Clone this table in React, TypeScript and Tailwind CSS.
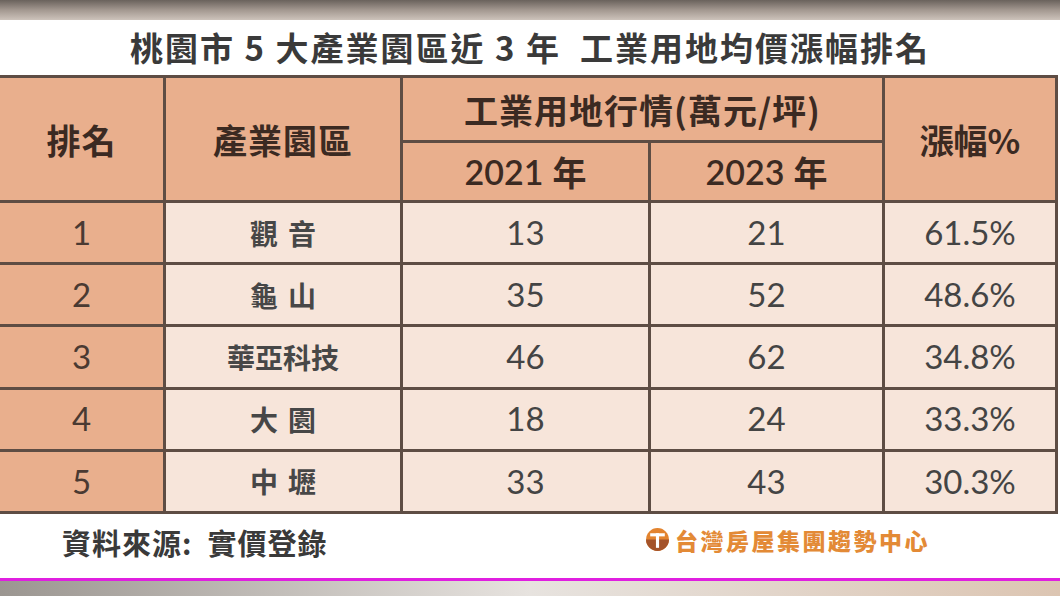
import React from "react";

const FONT = { fontFamily: "Lato, 'Noto Sans CJK TC', 'Noto Sans', sans-serif" };
const CJK = { fontFamily: "'Noto Sans CJK TC', 'Noto Sans', sans-serif" };

const rows = [
  { r: "1", name: ["觀", "音"], a: "13", b: "21", p: "61.5%" },
  { r: "2", name: ["龜", "山"], a: "35", b: "52", p: "48.6%" },
  { r: "3", name: ["華亞科技"], a: "46", b: "62", p: "34.8%" },
  { r: "4", name: ["大", "園"], a: "18", b: "24", p: "33.3%" },
  { r: "5", name: ["中", "壢"], a: "33", b: "43", p: "30.3%" },
];

function Logo() {
  return (
    <svg width="25" height="25" viewBox="0 0 24 24">
      <circle cx="12" cy="12" r="11" fill="#e3842f" />
      <path d="M1 12 A11 11 0 0 0 23 12 Z" fill="#a4532a" />
      <rect x="5" y="6" width="14" height="3" fill="#fff" />
      <rect x="10.5" y="6" width="3" height="14" fill="#fff" />
    </svg>
  );
}

export default function App() {
  return (
    <div className="w-[1060px] h-[596px] overflow-hidden bg-white flex flex-col" style={FONT}>
      <div className="h-[20px] bg-gradient-to-b from-[#6a625c] via-[#a39890] to-[#cdc3bb]" />
      <div className="h-[55px] flex items-center justify-center">
        <div className="text-[33px] font-bold text-[#3a3a3a] tracking-[2px] whitespace-pre" style={CJK}>
          桃園市 5 大產業園區近 3 年  工業用地均價漲幅排名
        </div>
      </div>
      <div className="flex">
        <div className="grid bg-[#5e4d44] pt-[3px] pr-[3px] pb-[3px] w-[1058px]">
          <div className="grid gap-[3px] grid-cols-[163px_234px_245px_231px_170px] grid-rows-[62px_57px_repeat(5,59.2px)]">
            <div className="row-span-2 bg-[#e9af8d] flex items-center justify-center text-[34px] font-bold text-[#3b2a22] tracking-[1px]" style={CJK}>
              排名
            </div>
            <div className="row-span-2 bg-[#e9af8d] flex items-center justify-center text-[34px] font-bold text-[#3b2a22] tracking-[1px]" style={CJK}>
              產業園區
            </div>
            <div className="col-span-2 bg-[#e9af8d] flex items-center justify-center text-[34px] font-bold text-[#3b2a22] tracking-[1px]" style={CJK}>
              工業用地行情(萬元/坪)
            </div>
            <div className="row-span-2 bg-[#e9af8d] flex items-center justify-center text-[34px] font-bold text-[#3b2a22]" style={CJK}>
              漲幅%
            </div>
            <div className="bg-[#e9af8d] flex items-center justify-center text-[34px] text-[#3b2a22] gap-[9px]">
              <span className="font-semibold">2021</span>
              <span className="font-bold" style={CJK}>年</span>
            </div>
            <div className="bg-[#e9af8d] flex items-center justify-center text-[34px] text-[#3b2a22] gap-[9px]">
              <span className="font-semibold">2023</span>
              <span className="font-bold" style={CJK}>年</span>
            </div>
            {rows.map((row) => (
              <React.Fragment key={row.r}>
                <div className="bg-[#e9af8d] flex items-center justify-center text-[33px] text-[#4a3a32]">{row.r}</div>
                <div className="bg-[#f7e5da] flex items-center justify-center gap-[10px] text-[28px] font-bold text-[#474747]" style={CJK}>
                  {row.name.map((c) => (
                    <span key={c}>{c}</span>
                  ))}
                </div>
                <div className="bg-[#f7e5da] flex items-center justify-center text-[33px] text-[#444]">{row.a}</div>
                <div className="bg-[#f7e5da] flex items-center justify-center text-[33px] text-[#444]">{row.b}</div>
                <div className="bg-[#f7e5da] flex items-center justify-center text-[33px] text-[#444]">{row.p}</div>
              </React.Fragment>
            ))}
          </div>
        </div>
      </div>
      <div className="h-[64px] flex items-center">
        <div className="pl-[62px] w-[645px] text-[29px] font-bold text-[#3a3a3a] -mt-[6px] tracking-[1px] whitespace-pre" style={CJK}>
          資料來源:  實價登錄
        </div>
        <div className="flex items-center gap-[5px] -mt-[12px]">
          <Logo />
          <span className="text-[23px] font-black text-[#e38a36] tracking-[2.5px]" style={CJK}>
            台灣房屋集團趨勢中心
          </span>
        </div>
      </div>
      <div className="h-[3px] bg-[#e01fe0]" />
      <div className="flex-1 bg-gradient-to-r from-[#9b9691] via-[#e7e3df] to-[#dcc5b2]" />
    </div>
  );
}
